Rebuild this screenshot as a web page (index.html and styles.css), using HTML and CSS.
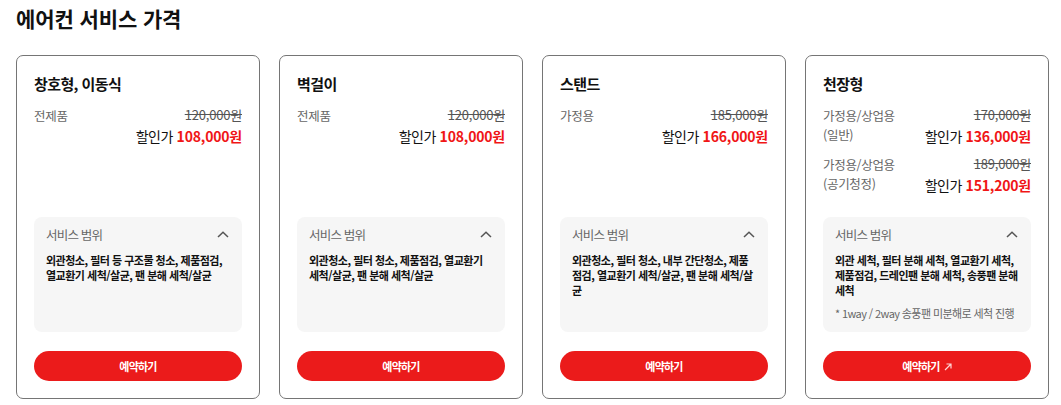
FILE: index.html
```html
<!DOCTYPE html>
<html lang="ko">
<head>
<meta charset="utf-8">
<title>에어컨 서비스 가격</title>
<link rel="stylesheet" href="styles.css">
</head>
<body>
<h1 class="page-title">에어컨 서비스 가격</h1>
<div class="cards">
  <section class="card">
    <h2 class="card-title">창호형, 이동식</h2>
    <div class="prices">
      <div class="price-row">
        <div class="label">전제품</div>
        <div class="amounts">
          <div class="orig">120,000원</div>
          <div class="sale">할인가 <strong>108,000원</strong></div>
        </div>
      </div>
    </div>
    <div class="scope">
      <div class="scope-head"><span>서비스 범위</span><svg class="chev" width="12" height="7" viewBox="0 0 12 7"><polyline points="1,6 6,1.2 11,6" fill="none" stroke="#555" stroke-width="1.5"/></svg></div>
      <p class="scope-text">외관청소, 필터 등 구조물 청소, 제품점검, 열교환기 세척/살균, 팬 분해 세척/살균</p>
    </div>
    <button class="book">예약하기</button>
  </section>
  <section class="card">
    <h2 class="card-title">벽걸이</h2>
    <div class="prices">
      <div class="price-row">
        <div class="label">전제품</div>
        <div class="amounts">
          <div class="orig">120,000원</div>
          <div class="sale">할인가 <strong>108,000원</strong></div>
        </div>
      </div>
    </div>
    <div class="scope">
      <div class="scope-head"><span>서비스 범위</span><svg class="chev" width="12" height="7" viewBox="0 0 12 7"><polyline points="1,6 6,1.2 11,6" fill="none" stroke="#555" stroke-width="1.5"/></svg></div>
      <p class="scope-text">외관청소, 필터 청소, 제품점검, 열교환기 세척/살균, 팬 분해 세척/살균</p>
    </div>
    <button class="book">예약하기</button>
  </section>
  <section class="card">
    <h2 class="card-title">스탠드</h2>
    <div class="prices">
      <div class="price-row">
        <div class="label">가정용</div>
        <div class="amounts">
          <div class="orig">185,000원</div>
          <div class="sale">할인가 <strong>166,000원</strong></div>
        </div>
      </div>
    </div>
    <div class="scope">
      <div class="scope-head"><span>서비스 범위</span><svg class="chev" width="12" height="7" viewBox="0 0 12 7"><polyline points="1,6 6,1.2 11,6" fill="none" stroke="#555" stroke-width="1.5"/></svg></div>
      <p class="scope-text">외관청소, 필터 청소, 내부 간단청소, 제품점검, 열교환기 세척/살균, 팬 분해 세척/살균</p>
    </div>
    <button class="book">예약하기</button>
  </section>
  <section class="card">
    <h2 class="card-title">천장형</h2>
    <div class="prices">
      <div class="price-row">
        <div class="label">가정용/상업용<br>(일반)</div>
        <div class="amounts">
          <div class="orig">170,000원</div>
          <div class="sale">할인가 <strong>136,000원</strong></div>
        </div>
      </div>
      <div class="price-row">
        <div class="label">가정용/상업용<br>(공기청정)</div>
        <div class="amounts">
          <div class="orig">189,000원</div>
          <div class="sale">할인가 <strong>151,200원</strong></div>
        </div>
      </div>
    </div>
    <div class="scope">
      <div class="scope-head"><span>서비스 범위</span><svg class="chev" width="12" height="7" viewBox="0 0 12 7"><polyline points="1,6 6,1.2 11,6" fill="none" stroke="#555" stroke-width="1.5"/></svg></div>
      <p class="scope-text">외관 세척, 필터 분해 세척, 열교환기 세척, 제품점검, 드레인팬 분해 세척, 송풍팬 분해 세척</p>
      <p class="scope-note">* 1way / 2way 송풍팬 미분해로 세척 진행</p>
    </div>
    <button class="book">예약하기<svg class="ext" width="8" height="8" viewBox="0 0 8 8"><path d="M1 7L7 1M2.5 1H7V5.5" fill="none" stroke="#ffd6d6" stroke-width="1.2"/></svg></button>
  </section>
</div>
</body>
</html>
```
FILE: styles.css
```css
* { box-sizing: border-box; }
body {
  margin: 0;
  font-family: "Noto Sans CJK KR", "Noto Sans", sans-serif;
  color: #111;
  background: #fff;
}
.page-title {
  margin: 4px 0 23px 16px;
  font-size: 21px;
  line-height: 28px;
  font-weight: 700;
  letter-spacing: -0.1px;
}
.cards {
  display: grid;
  grid-template-columns: repeat(4, 244px);
  column-gap: 19px;
  padding-left: 16px;
}
.card {
  display: flex;
  flex-direction: column;
  border: 1px solid #757575;
  border-radius: 7px;
  padding: 17px 17px 17px 17px;
  height: 344px;
}
.card-title {
  margin: 0 0 10px;
  font-size: 15px;
  line-height: 22px;
  font-weight: 700;
  letter-spacing: -0.6px;
}
.prices {
  display: flex;
  flex-direction: column;
  gap: 7px;
}
.price-row {
  display: flex;
  justify-content: space-between;
  align-items: flex-start;
}
.label {
  font-size: 12.5px;
  line-height: 19px;
  color: #666;
  letter-spacing: -0.3px;
  padding-top: 1px;
}
.amounts {
  text-align: right;
}
.orig {
  font-size: 13px;
  line-height: 20px;
  color: #555;
  text-decoration: line-through;
  letter-spacing: -0.2px;
}
.sale {
  font-size: 14px;
  line-height: 22px;
  letter-spacing: -0.4px;
  color: #111;
}
.sale strong {
  color: #f01616;
  font-weight: 700;
  letter-spacing: -0.2px;
}
.scope {
  margin-top: auto;
  height: 115px;
  flex-shrink: 0;
  background: #f6f6f6;
  border-radius: 8px;
  padding: 9px 13px 8px 12px;
}
.scope-head {
  display: flex;
  justify-content: space-between;
  align-items: center;
  font-size: 12.5px;
  line-height: 18px;
  color: #666;
  letter-spacing: -0.8px;
}
.chev { margin-top: -2px; }
.scope-text {
  margin: 9px 0 0;
  font-size: 11px;
  line-height: 15px;
  font-weight: 700;
  letter-spacing: -0.5px;
  color: #111;
}
.scope-note {
  margin: 8px 0 0;
  font-size: 11px;
  line-height: 15px;
  color: #666;
  letter-spacing: -0.6px;
  white-space: nowrap;
}
.book {
  margin-top: 19px;
  height: 30px;
  flex-shrink: 0;
  border: 0;
  border-radius: 15px;
  background: #eb1b1b;
  color: #fff;
  font-family: inherit;
  font-size: 11px;
  font-weight: 700;
  letter-spacing: -0.8px;
  display: flex;
  align-items: center;
  justify-content: center;
  gap: 4px;
  padding: 0;
}
.ext { margin-top: 1px; }
```
